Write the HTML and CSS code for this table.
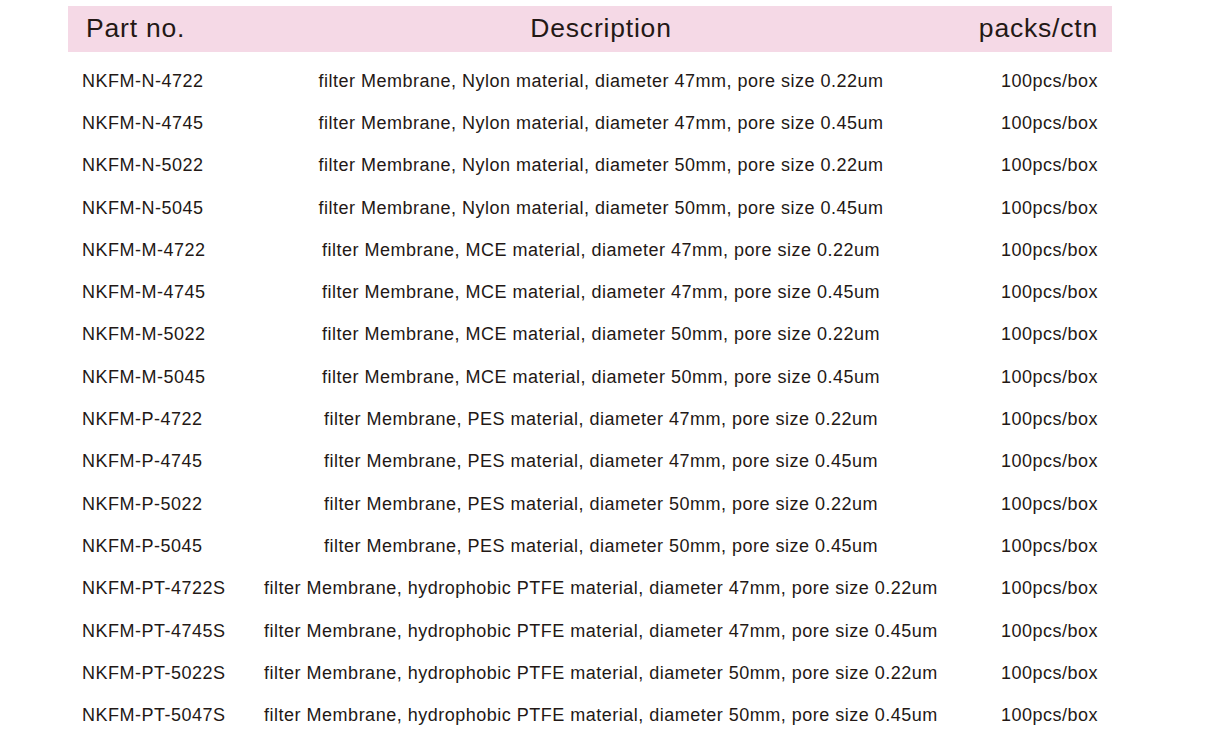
FILE: index.html
```html
<!DOCTYPE html>
<html>
<head>
<meta charset="utf-8">
<link rel="stylesheet" href="styles.css">
</head>
<body>
<div class="table">
  <div class="head">
    <div class="c-part">Part no.</div>
    <div class="c-desc">Description</div>
    <div class="c-pack">packs/ctn</div>
  </div>
  <div class="row"><div class="c-part">NKFM-N-4722</div><div class="c-desc">filter Membrane, Nylon material, diameter 47mm, pore size 0.22um</div><div class="c-pack">100pcs/box</div></div>
  <div class="row"><div class="c-part">NKFM-N-4745</div><div class="c-desc">filter Membrane, Nylon material, diameter 47mm, pore size 0.45um</div><div class="c-pack">100pcs/box</div></div>
  <div class="row"><div class="c-part">NKFM-N-5022</div><div class="c-desc">filter Membrane, Nylon material, diameter 50mm, pore size 0.22um</div><div class="c-pack">100pcs/box</div></div>
  <div class="row"><div class="c-part">NKFM-N-5045</div><div class="c-desc">filter Membrane, Nylon material, diameter 50mm, pore size 0.45um</div><div class="c-pack">100pcs/box</div></div>
  <div class="row"><div class="c-part">NKFM-M-4722</div><div class="c-desc">filter Membrane, MCE material, diameter 47mm, pore size 0.22um</div><div class="c-pack">100pcs/box</div></div>
  <div class="row"><div class="c-part">NKFM-M-4745</div><div class="c-desc">filter Membrane, MCE material, diameter 47mm, pore size 0.45um</div><div class="c-pack">100pcs/box</div></div>
  <div class="row"><div class="c-part">NKFM-M-5022</div><div class="c-desc">filter Membrane, MCE material, diameter 50mm, pore size 0.22um</div><div class="c-pack">100pcs/box</div></div>
  <div class="row"><div class="c-part">NKFM-M-5045</div><div class="c-desc">filter Membrane, MCE material, diameter 50mm, pore size 0.45um</div><div class="c-pack">100pcs/box</div></div>
  <div class="row"><div class="c-part">NKFM-P-4722</div><div class="c-desc">filter Membrane, PES material, diameter 47mm, pore size 0.22um</div><div class="c-pack">100pcs/box</div></div>
  <div class="row"><div class="c-part">NKFM-P-4745</div><div class="c-desc">filter Membrane, PES material, diameter 47mm, pore size 0.45um</div><div class="c-pack">100pcs/box</div></div>
  <div class="row"><div class="c-part">NKFM-P-5022</div><div class="c-desc">filter Membrane, PES material, diameter 50mm, pore size 0.22um</div><div class="c-pack">100pcs/box</div></div>
  <div class="row"><div class="c-part">NKFM-P-5045</div><div class="c-desc">filter Membrane, PES material, diameter 50mm, pore size 0.45um</div><div class="c-pack">100pcs/box</div></div>
  <div class="row"><div class="c-part">NKFM-PT-4722S</div><div class="c-desc">filter Membrane, hydrophobic PTFE material, diameter 47mm, pore size 0.22um</div><div class="c-pack">100pcs/box</div></div>
  <div class="row"><div class="c-part">NKFM-PT-4745S</div><div class="c-desc">filter Membrane, hydrophobic PTFE material, diameter 47mm, pore size 0.45um</div><div class="c-pack">100pcs/box</div></div>
  <div class="row"><div class="c-part">NKFM-PT-5022S</div><div class="c-desc">filter Membrane, hydrophobic PTFE material, diameter 50mm, pore size 0.22um</div><div class="c-pack">100pcs/box</div></div>
  <div class="row"><div class="c-part">NKFM-PT-5047S</div><div class="c-desc">filter Membrane, hydrophobic PTFE material, diameter 50mm, pore size 0.45um</div><div class="c-pack">100pcs/box</div></div>
</div>
</body>
</html>
```

FILE: styles.css
```css
html, body {
  margin: 0;
  padding: 0;
  background: #ffffff;
}
body {
  font-family: "Liberation Sans", Arial, sans-serif;
  color: #231815;
}
.table {
  width: 1044px;
  margin: 6px 0 0 68px;
}
.head, .row {
  display: grid;
  grid-template-columns: 172px 1fr 150px;
  align-items: center;
  padding: 0 14px;
}
.head {
  height: 46px;
  box-sizing: border-box;
  padding-bottom: 2px;
  background: #f5d9e6;
  font-size: 26.5px;
  letter-spacing: 0.8px;
  margin-bottom: 8px;
}
.head .c-part {
  padding-left: 4px;
}
.row {
  height: 42.3px;
  font-size: 18px;
  letter-spacing: 0.5px;
}
.c-part {
  text-align: left;
  white-space: nowrap;
}
.c-desc {
  text-align: center;
  white-space: nowrap;
}
.c-pack {
  text-align: right;
  white-space: nowrap;
}
```
